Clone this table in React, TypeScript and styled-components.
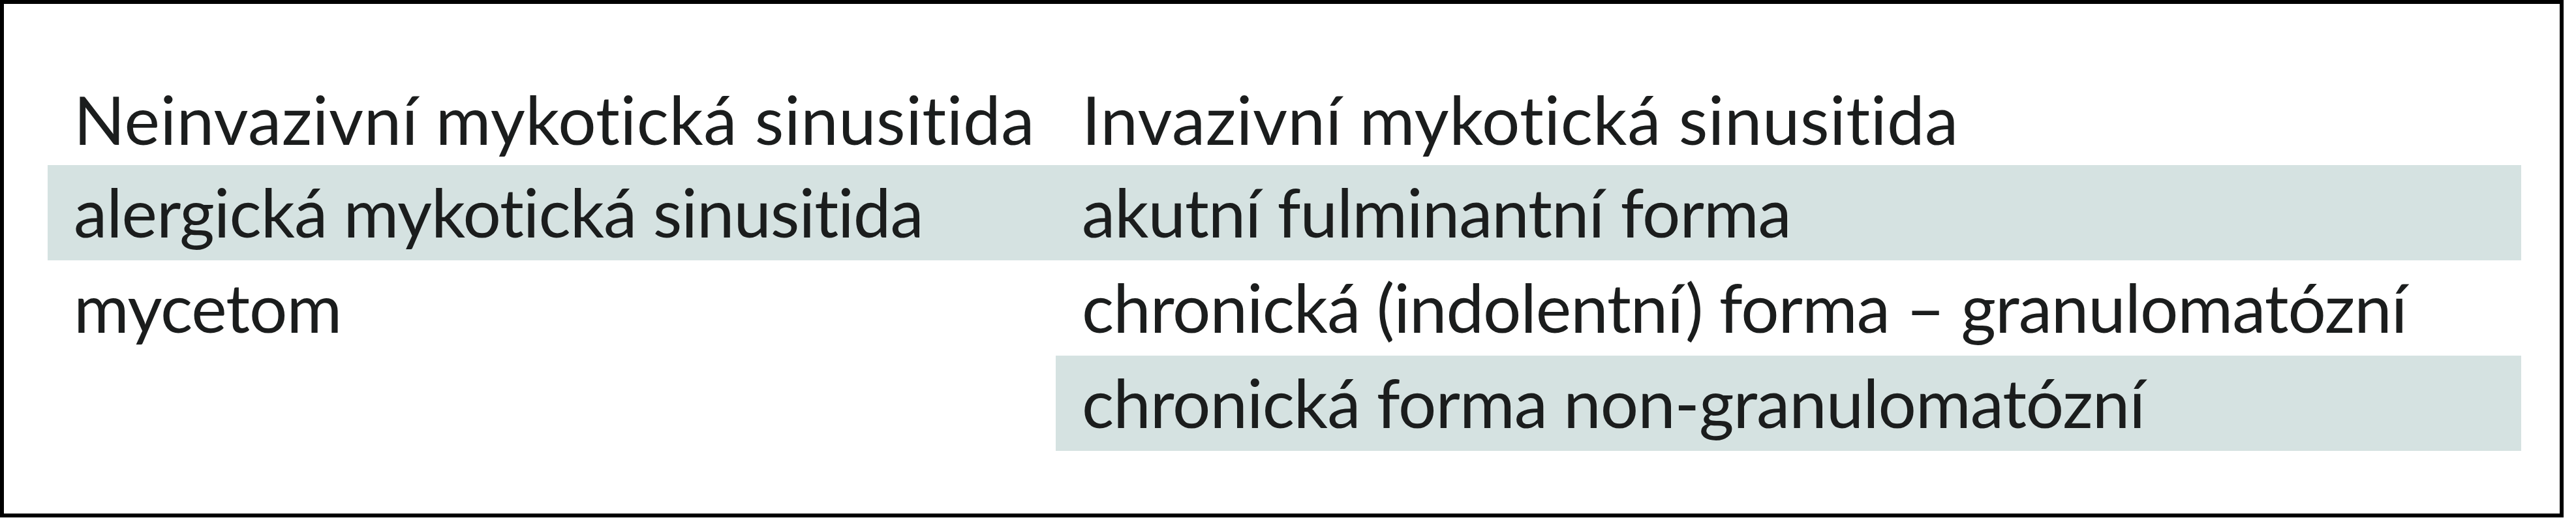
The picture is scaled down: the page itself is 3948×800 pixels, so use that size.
import * as React from 'react';
import styled, {createGlobalStyle} from 'styled-components';

const GlobalStyle = createGlobalStyle`
    html, body { margin: 0; padding: 0; background: #ffffff; }
`;

const rows: Array<{left: string; right: string; shadeLeft: boolean; shadeRight: boolean}> = [
    {left: 'alergická mykotická sinusitida', right: 'akutní fulminantní forma', shadeLeft: true, shadeRight: true},
    {left: 'mycetom', right: 'chronická (indolentní) forma – granulomatózní', shadeLeft: false, shadeRight: false},
    {left: '', right: 'chronická forma non-granulomatózní', shadeLeft: false, shadeRight: true},
];

const App = () => {
    return (<>
        <GlobalStyle />
        <Frame>
            <Table>
                <colgroup>
                    <col style={{width: 1545}} />
                    <col style={{width: 2246}} />
                </colgroup>
                <thead>
                    <tr>
                        <HeadCell>Neinvazivní mykotická sinusitida</HeadCell>
                        <HeadCell>Invazivní mykotická sinusitida</HeadCell>
                    </tr>
                </thead>
                <tbody>
                    {rows.map((r, i) => (
                        <tr key={i}>
                            <Cell $shaded={r.shadeLeft}>{r.left}</Cell>
                            <Cell $shaded={r.shadeRight}>{r.right}</Cell>
                        </tr>
                    ))}
                </tbody>
            </Table>
        </Frame>
    </>);
};

export default App;

const Frame = styled.div`
    box-sizing: border-box;
    width: 3929px; height: 793px;
    border: 6px solid #000;
    background: #fff;
    padding: 114px 0 0 67px;
`;

const Table = styled.table`
    border-collapse: collapse; border-spacing: 0;
    table-layout: fixed; width: 3791px;
    font-family: Lato, "Open Sans", sans-serif;
    font-size: 103px; line-height: 124px;
    color: #1b1d1d;
`;

const HeadCell = styled.th`
    font-weight: normal; text-align: left;
    padding: 0 0 9px 40px;
    letter-spacing: 0.5px;
    white-space: nowrap;
`;

const Cell = styled.td<{$shaded: boolean}>`
    padding: 9px 0 13px 40px;
    letter-spacing: -1px;
    white-space: nowrap;
    background: ${(p) => (p.$shaded ? '#d5e2e1' : 'transparent')};
`;
